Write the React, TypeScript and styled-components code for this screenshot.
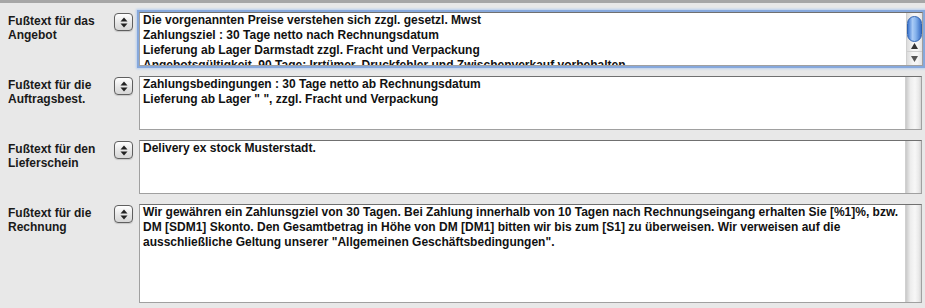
import React from "react";
import styled, { createGlobalStyle } from "styled-components";

const GlobalStyle = createGlobalStyle`
  html, body {
    margin: 0;
    padding: 0;
    background: #e8e8e8;
  }
  body {
    font-family: "Liberation Sans", Arial, sans-serif;
    color: #111;
  }
`;

const StyledPage = styled.div`
  width: 925px;
  height: 308px;
  overflow: hidden;
  background: #e8e8e8;
  border-top: 3px solid #a6a6a6;
  box-sizing: border-box;
`;

const StyledRows = styled.div`
  display: flex;
  flex-direction: column;
  gap: 10px;
  padding: 9px 2px 0 8px;
`;

const StyledRow = styled.div`
  display: grid;
  grid-template-columns: 106px 25px 1fr;
  align-items: start;
`;

const StyledLabel = styled.div`
  font-size: 12px;
  font-weight: bold;
  line-height: 14px;
  color: #1a1a1a;
  padding-top: 2px;
`;

const StyledStepper = styled.div`
  width: 17px;
  height: 16px;
  margin-top: 1px;
  border: 1px solid #5f5f5f;
  border-radius: 4px;
  background: linear-gradient(#ffffff, #e4e4e4 60%, #d6d6d6);
  box-shadow: 0 1px 1px rgba(0, 0, 0, 0.15);
  display: flex;
  align-items: center;
  justify-content: center;
`;

const StyledField = styled.div<{ $height: number; $focused?: boolean }>`
  height: ${(p) => p.$height}px;
  box-sizing: border-box;
  display: flex;
  background: #fff;
  border: 1px solid #a0a0a0;
  border-top-color: #707070;
  box-shadow: ${(p) =>
    p.$focused ? "0 0 0 2px #86a8dc, 0 0 2px 3px #b9cfee" : "none"};
  margin-right: ${(p) => (p.$focused ? 0 : 1)}px;
`;

const StyledText = styled.div`
  flex: 1;
  padding: 0 3px;
  font-size: 12px;
  font-weight: bold;
  line-height: 15px;
  color: #111;
  overflow: hidden;
  white-space: nowrap;
`;

const StyledTrack = styled.div`
  width: 15px;
  flex: none;
  background: linear-gradient(
    90deg,
    #c9c9c9,
    #ededed 30%,
    #f7f7f7 60%,
    #e9e9e9 85%,
    #d6d6d6
  );
  border-left: 1px solid #d0d0d0;
`;

const StyledScroller = styled.div`
  width: 15px;
  flex: none;
  display: flex;
  flex-direction: column;
  background: linear-gradient(90deg, #dcdcdc, #f5f5f5 40%, #f5f5f5 70%, #e2e2e2);
  border-left: 1px solid #d0d0d0;
`;

const StyledThumb = styled.div`
  margin: 3px 0 0 0;
  height: 24px;
  border-radius: 8px;
  border: 1px solid #2f62b0;
  background: linear-gradient(90deg, #3f77cf, #a9cbf6 35%, #86b3ec 60%, #3a71c8);
`;

const StyledArrow = styled.div<{ $divided?: boolean }>`
  height: ${(p) => (p.$divided ? 13 : 7)}px;
  flex: none;
  display: flex;
  align-items: center;
  justify-content: center;
  border-top: ${(p) => (p.$divided ? "1px solid #cfcfcf" : "none")};
`;

function Stepper() {
  return (
    <StyledStepper>
      <svg width="8" height="11" viewBox="0 0 8 11">
        <path d="M4 0.5 L7.5 4.5 H0.5 Z" fill="#222" />
        <path d="M4 10.5 L7.5 6.5 H0.5 Z" fill="#222" />
      </svg>
    </StyledStepper>
  );
}

const rows = [
  {
    label: ["Fußtext für das", "Angebot"],
    height: 54,
    focused: true,
    lines: [
      "Die vorgenannten Preise verstehen sich zzgl. gesetzl. Mwst",
      "Zahlungsziel : 30 Tage netto nach Rechnungsdatum",
      "Lieferung ab Lager Darmstadt zzgl. Fracht und Verpackung",
      "Angebotsgültigkeit, 90 Tage; Irrtümer, Druckfehler und Zwischenverkauf vorbehalten",
    ],
  },
  {
    label: ["Fußtext für die", "Auftragsbest."],
    height: 54,
    lines: [
      "Zahlungsbedingungen : 30 Tage netto ab Rechnungsdatum",
      'Lieferung ab Lager " ", zzgl. Fracht und Verpackung',
    ],
  },
  {
    label: ["Fußtext für den", "Lieferschein"],
    height: 54,
    lines: ["Delivery ex stock Musterstadt."],
  },
  {
    label: ["Fußtext für die", "Rechnung"],
    height: 99,
    lines: [
      "Wir gewähren ein Zahlunsgziel von 30 Tagen. Bei Zahlung innerhalb von 10 Tagen nach Rechnungseingang erhalten Sie [%1]%, bzw.",
      "DM [SDM1] Skonto. Den Gesamtbetrag in Höhe von DM [DM1] bitten wir bis zum [S1] zu überweisen. Wir verweisen auf die",
      'ausschließliche Geltung unserer "Allgemeinen Geschäftsbedingungen".',
    ],
  },
];

export default function App() {
  return (
    <>
      <GlobalStyle />
      <StyledPage>
        <StyledRows>
          {rows.map((row) => (
            <StyledRow key={row.label.join(" ")}>
              <StyledLabel>
                {row.label[0]}
                <br />
                {row.label[1]}
              </StyledLabel>
              <Stepper />
              <StyledField $height={row.height} $focused={row.focused}>
                <StyledText>
                  {row.lines.map((line) => (
                    <div key={line}>{line}</div>
                  ))}
                </StyledText>
                {row.focused ? (
                  <StyledScroller>
                    <StyledThumb />
                    <StyledArrow>
                      <svg width="7" height="6" viewBox="0 0 7 6">
                        <path d="M3.5 0 L7 6 H0 Z" fill="#333" />
                      </svg>
                    </StyledArrow>
                    <div style={{ flex: 1 }} />
                    <StyledArrow $divided>
                      <svg width="7" height="6" viewBox="0 0 7 6">
                        <path d="M0 0 H7 L3.5 6 Z" fill="#555" />
                      </svg>
                    </StyledArrow>
                  </StyledScroller>
                ) : (
                  <StyledTrack />
                )}
              </StyledField>
            </StyledRow>
          ))}
        </StyledRows>
      </StyledPage>
    </>
  );
}
